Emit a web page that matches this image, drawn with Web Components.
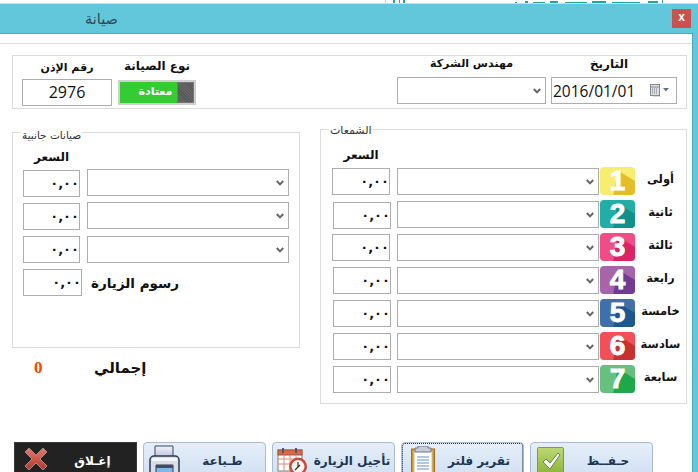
<!DOCTYPE html>
<html lang="ar">
<head>
<meta charset="utf-8">
<title>صيانة</title>
<style>
  html, body { margin: 0; height: 472px; overflow: hidden; background: #fff; }
  body { font-family: "DejaVu Sans", "Noto Sans", sans-serif; font-size: 12px; color: #111; }
</style>
</head>
<body>

<maint-window title-text="صيانة">
  <form-box style="--h:54px;width:675px">
    <div slot="body" style="display:grid;grid-template-columns:90px 79px 1fr 149px 126px;column-gap:5px;padding:0 9px">
      <labeled-field label="رقم الإذن" style="--pad:5px;--gap:4px;--size:11px"><value-box align="center">2976</value-box></labeled-field>
      <labeled-field label="نوع الصيانة" style="--pad:3px;--gap:6px;margin-left:1px"><type-toggle>معتادة</type-toggle></labeled-field>
      <span></span>
      <labeled-field label="مهندس الشركة" style="--pad:1px;--gap:6px;--size:11px"><combo-box></combo-box></labeled-field>
      <labeled-field label="التاريخ" style="--pad:1px;--gap:6px;--label-end:10px"><date-field>2016/01/01</date-field></labeled-field>
    </div>
  </form-box>

  <div style="display:grid;grid-template-columns:288px 367px;column-gap:20px;margin-top:20px">
    <div style="padding-top:3px">
      <form-box legend="صيانات جانبية" style="--h:216px;--legend-x:8px;--legend-y:-4px;--legend-size:10.5px">
        <div slot="body" style="display:grid;row-gap:6px;padding:17px 0 0 10px">
          <price-head style="--w:57px;--mb:-1px"></price-head>
          <part-row w="57" style="--mt:1px"></part-row>
          <part-row w="57" style="--mt:1px"></part-row>
          <part-row w="57" style="margin-top:1px"></part-row>
          <div style="display:flex;align-items:center;gap:9px">
            <value-box price style="width:59px"></value-box>
            <strong style="font-size:13.5px;font-weight:700">رسوم الزيارة</strong>
          </div>
        </div>
      </form-box>
      <total-row style="margin-top:10px">0</total-row>
    </div>

    <form-box legend="الشمعات" style="--h:275px;--legend-x:8px;--legend-y:-5px;--legend-size:11px">
      <div slot="body" style="display:grid;row-gap:6px;padding:18px 0 0 11px">
        <price-head style="--w:58px"></price-head>
        <part-row w="58" rank="1" name="أولى" a="#f7ee70" b="#e3bd2a"></part-row>
        <part-row w="58" rank="2" name="ثانية" a="#22ada7" b="#12918c" style="--px:1px;--mt:1px"></part-row>
        <part-row w="58" rank="3" name="ثالثة" a="#ee4d85" b="#d92467"></part-row>
        <part-row w="58" rank="4" name="رابعة" a="#a864aa" b="#703b90" style="--px:1px"></part-row>
        <part-row w="58" rank="5" name="خامسة" a="#4170a8" b="#1c5890" style="--px:1px"></part-row>
        <part-row w="58" rank="6" name="سادسة" a="#f05058" b="#c63030" style="--px:1px"></part-row>
        <part-row w="58" rank="7" name="سابعة" a="#68c080" b="#1ea84a" style="--px:1px"></part-row>
      </div>
    </form-box>
  </div>

  <div slot="actions" style="display:flex;gap:6px;padding-left:14px">
    <action-btn icon="close" dark>إغـلاق</action-btn>
    <action-btn icon="print">طـباعة</action-btn>
    <action-btn icon="calendar">تأجيل الزيارة</action-btn>
    <action-btn icon="report" focused>تقرير فلتر</action-btn>
    <action-btn icon="save">حـفــظ</action-btn>
  </div>
</maint-window>

<script>
// window frame with the title bar, the content and the bottom buttons
class MaintWindow extends HTMLElement {
  constructor() {
    super();
    this.attachShadow({ mode: "open" }).innerHTML = `
      <style>
        :host { display: block; width: 698px; height: 472px; overflow: hidden; background: #63c7db; }
        .strip { display: block; height: 4px; background: #fff; }
        .bar { height: 29px; display: grid; grid-template-columns: 1fr auto; align-items: center; padding: 0 7px 0 0; }
        .title { font-size: 14.500px; color: #2b4a52; padding-left: 85px; padding-top: 1px; }
        .close { width: 19px; height: 19px; background: #c9524f; color: #fff; font: bold 12px/17px "Liberation Sans", sans-serif; text-align: center; margin-top: -1px; }
        .panel { width: 693px; height: 439px; box-sizing: border-box; background: #fff; border-top: 1px solid #4aa9b9; border-right: 1px solid #4aa9b9; }
        .line { height: 9px; border-bottom: 1px solid #ddd; }
        .main { padding: 11px 0 0 12px; height: 398px; box-sizing: border-box; }
      </style>
      <svg class="strip" width="698" height="4">
        <rect y="3" width="698" height="1" fill="#d9d9d9"/>
        <rect x="385" width="1" height="3" fill="#ccc"/>
        <path d="M393 0h2v3h-2zM399 0h1v3h-1zM403 0h2v3h-2zM515 2h2v1h-2zM525 1h3v2h-3zM533 2h12v1h-12zM550 1h8v2h-8zM565 2h22v1h-22zM592 1h14v2h-14zM612 2h28v1h-28zM648 1h10v2h-10zM662 0h1v3h-1z" fill="#21a59a"/>
      </svg>
      <div class="bar"><div class="title"></div><div class="close">x</div></div>
      <div class="panel">
        <div class="line"></div>
        <div class="main"><slot></slot></div>
        <slot name="actions"></slot>
      </div>`;
  }
  connectedCallback() {
    this.shadowRoot.querySelector(".title").textContent = this.getAttribute("title-text");
  }
}

// grey outlined group, the legend sits over its top border
class FormBox extends HTMLElement {
  constructor() {
    super();
    this.attachShadow({ mode: "open" }).innerHTML = `
      <style>
        :host { display: block; position: relative; box-sizing: border-box; height: var(--h); border: 1px solid #dcdcdc; }
        .legend { position: absolute; top: var(--legend-y, -6px); left: var(--legend-x, 8px); padding: 0 1px; background: #fff; font-size: var(--legend-size, 10px); line-height: 12px; color: #333; }
      </style>
      <div class="legend"></div>
      <slot name="body"></slot>`;
  }
  connectedCallback() {
    const legend = this.shadowRoot.querySelector(".legend");
    if (this.hasAttribute("legend")) legend.textContent = this.getAttribute("legend");
    else legend.remove();
  }
}

class LabeledField extends HTMLElement {
  constructor() {
    super();
    this.attachShadow({ mode: "open" }).innerHTML = `
      <style>
        :host { display: flex; flex-direction: column; gap: var(--gap, 6px); padding-top: var(--pad, 0); }
        .label { font-size: var(--size, 12px); font-weight: 700; line-height: 14px; height: 14px; text-align: center; padding-right: var(--label-end, 0); }
      </style>
      <div class="label"></div>
      <slot></slot>`;
  }
  connectedCallback() {
    this.shadowRoot.querySelector(".label").textContent = this.getAttribute("label");
  }
}

// bordered read-only value: the plain number boxes and the prices
class ValueBox extends HTMLElement {
  constructor() {
    super();
    this.attachShadow({ mode: "open" }).innerHTML = `
      <style>
        :host { display: block; box-sizing: border-box; height: 27px; border: 1px solid #adadad; background: #fff; }
        .v { display: block; font: 16px/25px "Open Sans", sans-serif; color: #111; padding: 0 2px; }
        :host([align="center"]) .v { text-align: center; }
        :host([price]) .v { font: bold 13px/25px "DejaVu Sans", sans-serif; text-align: right; letter-spacing: 2.500px; padding-right: 0; }
      </style>
      <span class="v"><slot></slot></span>`;
  }
  connectedCallback() {
    if (this.hasAttribute("price") && !this.textContent.trim()) this.textContent = "٠,٠٠";
  }
}

class ComboBox extends HTMLElement {
  constructor() {
    super();
    this.attachShadow({ mode: "open" }).innerHTML = `
      <style>
        :host { display: grid; box-sizing: border-box; height: 27px; border: 1px solid #adadad; background: #fff; }
        select { grid-area: 1 / 1; appearance: none; border: 0; background: none; outline: 0; width: 100%; }
        svg { grid-area: 1 / 1; justify-self: end; align-self: center; margin-right: 4px; pointer-events: none; }
      </style>
      <select></select>
      <svg width="8" height="6" viewBox="0 0 8 6"><path d="M.8 1l3.2 3.4L7.2 1" fill="none" stroke="#666" stroke-width="2"/></svg>`;
  }
}

class DateField extends HTMLElement {
  constructor() {
    super();
    this.attachShadow({ mode: "open" }).innerHTML = `
      <style>
        :host { display: flex; align-items: center; box-sizing: border-box; height: 27px; border: 1px solid #adadad; background: #fff; padding: 0 6px 0 1px; font: 15.500px "Open Sans", sans-serif; color: #111; }
        span { flex: 1; }
      </style>
      <span><slot></slot></span>
      <svg width="20" height="13" viewBox="0 0 20 13">
        <rect x=".5" y=".5" width="9" height="11" fill="#dfe1e4" stroke="#85898e"/>
        <path d="M1 3h8" stroke="#85898e"/>
        <path d="M2 5h1M4 5h1M6 5h1M2 7h1M4 7h1M6 7h1M2 9h1M4 9h1M6 9h1" stroke="#70757a"/>
        <path d="M10 12h-8" stroke="#b9bcc0" transform="translate(1 1)"/>
        <path d="M13 4h6l-3 3.4z" fill="#5f6f8c"/>
      </svg>`;
  }
}

class TypeToggle extends HTMLElement {
  constructor() {
    super();
    this.attachShadow({ mode: "open" }).innerHTML = `
      <style>
        :host { display: grid; grid-template-columns: 1fr 17px; box-sizing: border-box; height: 25px; margin-top: 1px; border: 2px solid #cfcfcf; background: #33cc33; }
        .t { color: #fff; font-size: 11px; font-weight: 700; line-height: 20px; text-align: center; padding-left: 14px; }
        .h { background: #5f5f5f; border: 1px solid #787878; background-image: repeating-linear-gradient(45deg, #666 0 1px, #585858 1px 2px); }
      </style>
      <div class="t"><slot></slot></div><div class="h"></div>`;
  }
}

// number tile with the long diagonal shadow behind the digit
class RankBadge extends HTMLElement {
  constructor() {
    super();
    this.attachShadow({ mode: "open" }).innerHTML = `
      <style>
        :host { display: grid; width: 35px; height: 28px; margin-top: -1px; border-radius: 4px; background: var(--a); }
        .fold, .n { grid-area: 1 / 1; }
        .fold { background: var(--b); border-radius: 4px; clip-path: polygon(50% 12%, 100% 50%, 100% 100%, 38% 100%); }
        /* clip-path lifts .fold into its own layer, so the digit needs one too */
        .n { position: relative; font: 700 28px/28px "Liberation Sans", sans-serif; color: #fff; text-align: center; -webkit-text-stroke: .9px #fff; }
      </style>
      <div class="fold"></div><div class="n"><slot></slot></div>`;
  }
}

class PriceHead extends HTMLElement {
  constructor() {
    super();
    this.attachShadow({ mode: "open" }).innerHTML = `
      <style>
        :host { display: block; width: var(--w); height: 14px; margin-bottom: var(--mb, 0); font-size: 12px; font-weight: 700; line-height: 14px; text-align: center; }
      </style>السعر`;
  }
}

// one line of a group: price, list, and when ranked the tile and its name
class PartRow extends HTMLElement {
  constructor() {
    super();
    this.attachShadow({ mode: "open" });
  }
  connectedCallback() {
    const w = +this.getAttribute("w");
    const rank = this.getAttribute("rank");
    this.shadowRoot.innerHTML = `
      <style>
        :host { display: grid; grid-template-columns: ${w + 7}px 203px 35px 51px; height: 27px; }
        .price { width: ${w}px; margin: var(--mt, 0) 0 0 var(--px, 0); }
        combo-box { width: 202px; }
        ${rank ? `
        rank-badge { --a: ${this.getAttribute("a")}; --b: ${this.getAttribute("b")}; }
        .name { font-size: 11.500px; font-weight: 700; line-height: 22px; text-align: center; }` : ""}
      </style>
      <value-box class="price" price></value-box>
      <combo-box></combo-box>
      ${rank ? `<rank-badge>${rank}</rank-badge><div class="name">${this.getAttribute("name")}</div>` : ""}`;
  }
}

class TotalRow extends HTMLElement {
  constructor() {
    super();
    this.attachShadow({ mode: "open" }).innerHTML = `
      <style>
        :host { display: grid; grid-template-columns: 12px 52px; column-gap: 48px; padding-left: 22px; line-height: 20px; }
        .n { font: bold 17px/20px "Liberation Serif", serif; color: #ff4500; }
        .l { font-size: 15px; font-weight: 700; text-align: center; white-space: nowrap; }
      </style>
      <div class="n"><slot></slot></div><div class="l">إجمالي</div>`;
  }
}

const ICONS = {
  close: `<svg width="26" height="24" viewBox="0 0 26 24" style="margin-left:8px">
    <defs><linearGradient id="x" x1="0" y1="0" x2="0" y2="1"><stop offset="0" stop-color="#e8796b"/><stop offset="1" stop-color="#b5352b"/></linearGradient></defs>
    <path d="M2 5L6 1l7 7 7-7 4 4-7 7 7 7-4 4-7-7-7 7-4-4 7-7z" fill="url(#x)" stroke="#9a8f8c"/></svg>`,
  print: `<svg width="31" height="30" viewBox="0 0 31 30" style="margin:-2px 0 0 5px">
    <defs><linearGradient id="p" x1="0" y1="0" x2="0" y2="1"><stop offset="0" stop-color="#f1f2fa"/><stop offset="1" stop-color="#b5b9d8"/></linearGradient></defs>
    <path d="M6 1h18v13H6z" fill="url(#p)" stroke="#3b4660"/>
    <rect x="1" y="11" width="29" height="24" rx="4" fill="#d9dde6" stroke="#2f3a52" stroke-width="1.500"/>
    <path d="M3 13h25v3H3z" fill="#f5f6fa"/>
    <path d="M7 20h17v12H7z" fill="#7db9e8" stroke="#2f3a52"/>
    <path d="M7 20h17v3H7z" fill="#3e4c68"/></svg>`,
  calendar: `<svg width="33" height="28" viewBox="0 0 33 28" style="margin-left:4px">
    <rect x="1" y="3" width="24" height="21" fill="#fff" stroke="#8d7b76"/>
    <rect x="1" y="3" width="24" height="5" fill="#d8694a" stroke="#a9533c"/>
    <path d="M5 1h2v5H5zM18 1h2v5h-2z" fill="#556"/>
    <path d="M1 12h24M1 17h24M7 8v16M13 8v16M19 8v16" stroke="#e08a72"/>
    <circle cx="21" cy="19.500" r="9" fill="#c9483a"/>
    <circle cx="21" cy="19.500" r="6.500" fill="#f7f4ef"/>
    <path d="M21 15v5l-3 3M21 20l2-2" fill="none" stroke="#333" stroke-width="1.200"/></svg>`,
  report: `<svg width="24" height="29" viewBox="0 0 24 29" style="margin:-1px 0 0 9px">
    <rect x=".5" y="3" width="23" height="30" fill="#d9961f" stroke="#a86f12"/>
    <rect x="3" y="5" width="18" height="26" fill="#fff" stroke="#c9c2aa"/>
    <path d="M7 0h10v2h3v4H4V2h3z" fill="#c8ccd6" stroke="#6d7890"/>
    <path d="M6 11h12M6 14h12M6 17h12M6 20h12M6 23h12" stroke="#5f93c8"/></svg>`,
  save: `<svg width="27" height="28" viewBox="0 0 27 28" style="margin-left:6px">
    <defs><linearGradient id="s" x1="0" y1="0" x2="0" y2="1"><stop offset="0" stop-color="#bcd874"/><stop offset="1" stop-color="#84ad2c"/></linearGradient></defs>
    <rect x=".5" y=".5" width="26" height="32" rx="1" fill="url(#s)" stroke="#7f9a3a"/>
    <path d="M6 15l3-3 4 4 8-10 2 2-10 14z" fill="#f4f8ea" stroke="#6f7f58"/></svg>`,
};

class ActionBtn extends HTMLElement {
  constructor() {
    super();
    this.attachShadow({ mode: "open" });
  }
  connectedCallback() {
    this.shadowRoot.innerHTML = `
      <style>
        :host { display: grid; grid-template-columns: auto 1fr; align-items: start; box-sizing: border-box; width: 123px; height: 38px; padding-top: 4px; border: 1px solid #a9bcd6; border-radius: 4px; background: linear-gradient(#e6eef9, #cfdff2); color: #1a3553; font-size: 12px; font-weight: 700; overflow: hidden; }
        :host([dark]) { background: #222; border: 1px solid #3a3a3a; border-radius: 0; color: #fff; }
        :host([focused]) { outline: 1px dotted #1a2f55; outline-offset: -2px; }
        .t { text-align: center; line-height: 28px; white-space: nowrap; }
        svg { display: block; overflow: hidden; }
      </style>
      ${ICONS[this.getAttribute("icon")]}
      <div class="t"><slot></slot></div>`;
  }
}

customElements.define("maint-window", MaintWindow);
customElements.define("form-box", FormBox);
customElements.define("labeled-field", LabeledField);
customElements.define("value-box", ValueBox);
customElements.define("combo-box", ComboBox);
customElements.define("date-field", DateField);
customElements.define("type-toggle", TypeToggle);
customElements.define("rank-badge", RankBadge);
customElements.define("price-head", PriceHead);
customElements.define("part-row", PartRow);
customElements.define("total-row", TotalRow);
customElements.define("action-btn", ActionBtn);
</script>
</body>
</html>
